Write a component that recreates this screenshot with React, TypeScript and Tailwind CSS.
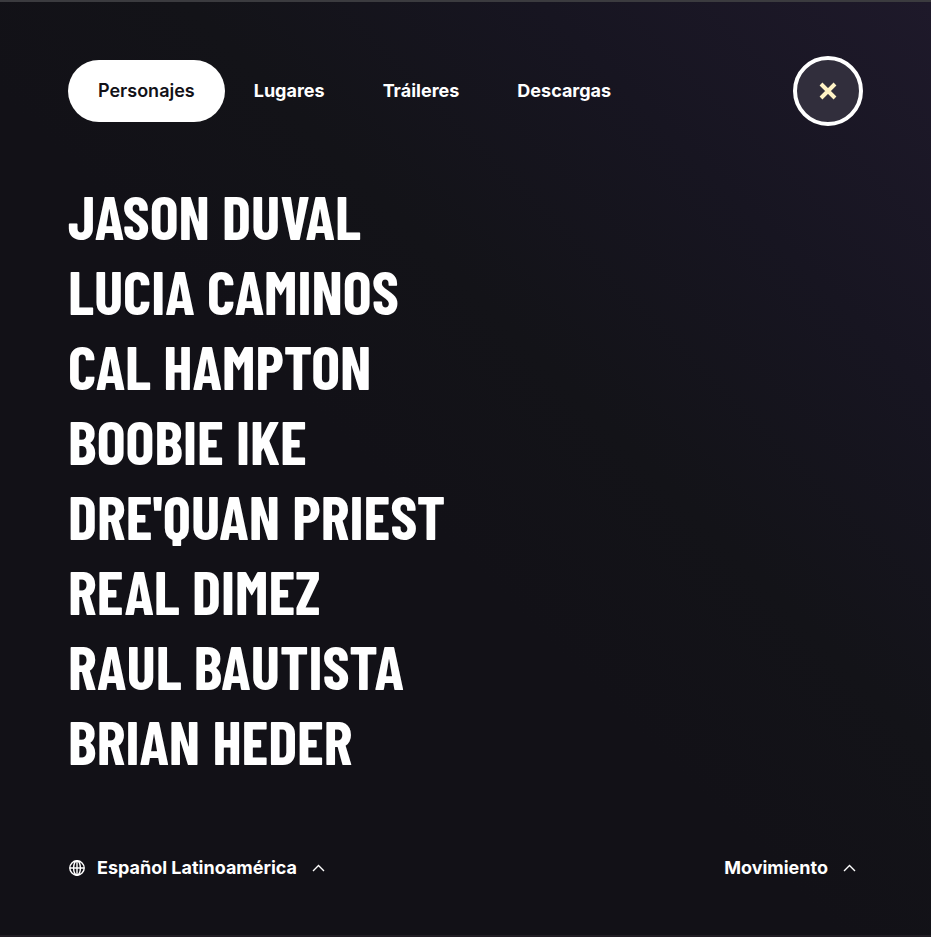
import React from 'react';

const characters: string[] = [
  'Jason Duval',
  'Lucia Caminos',
  'Cal Hampton',
  'Boobie Ike',
  "Dre'Quan Priest",
  'Real Dimez',
  'Raul Bautista',
  'Brian Heder',
];

const sections: string[] = ['Lugares', 'Tráileres', 'Descargas'];

function Caret() {
  return (
    <svg width="13" height="13" viewBox="0 0 13 13" fill="none" stroke="currentColor" strokeWidth="1.4" aria-hidden="true">
      <path d="M1 9 6.5 3.5 12 9" />
    </svg>
  );
}

function Globe() {
  return (
    <svg width="18" height="18" viewBox="0 0 18 18" fill="none" stroke="currentColor" strokeWidth="1.4" aria-hidden="true">
      <circle cx="9" cy="9" r="7.2" />
      <ellipse cx="9" cy="9" rx="3.4" ry="7.2" />
      <path d="M1.8 9h14.4M9 1.8v14.4" />
    </svg>
  );
}

export default function App() {
  return (
    <div className="flex min-h-screen flex-col border-t-2 border-b-2 border-t-[#3b3b3f] border-b-[#211d24] bg-[#121117] bg-[linear-gradient(to_top_right,#121117_0%,#121117_45%,#131318_60%,#171521_79%,#1e192a_100%)] px-[68px] pt-[54px] pb-[53px] font-['Inter','Liberation_Sans',sans-serif] text-lg font-bold text-white">
      <header className="flex items-center justify-between">
        <nav className="flex items-center">
          <button type="button" className="h-[62px] rounded-full bg-white px-[30px] font-semibold text-[#121117]">
            Personajes
          </button>
          {sections.map((name) => (
            <button key={name} type="button" className="h-[62px] px-[29px]">
              {name}
            </button>
          ))}
        </nav>
        <button
          type="button"
          aria-label="Cerrar"
          className="flex size-[70px] items-center justify-center rounded-full border-4 border-white bg-[#312e3c] text-[#fff3c5]"
        >
          <svg width="18" height="18" viewBox="0 0 18 18" fill="none" stroke="currentColor" strokeWidth="4" aria-hidden="true">
            <path d="M2 2 16 16M16 2 2 16" />
          </svg>
        </button>
      </header>

      <main className="mt-[52px]">
        <ul>
          {characters.map((name) => (
            <li key={name}>
              <a href="#" className="block w-fit font-['Barlow_Condensed','Roboto_Condensed','Liberation_Sans',sans-serif] text-[61px] leading-[75px] font-bold uppercase">
                {name}
              </a>
            </li>
          ))}
        </ul>
      </main>

      <footer className="mt-auto flex items-center justify-between">
        <button type="button" className="flex items-center">
          <Globe />
          <span className="mr-[15px] ml-[11px]">Español Latinoamérica</span>
          <Caret />
        </button>
        <button type="button" className="mr-[7px] flex items-center">
          <span className="mr-[15px]">Movimiento</span>
          <Caret />
        </button>
      </footer>
    </div>
  );
}
